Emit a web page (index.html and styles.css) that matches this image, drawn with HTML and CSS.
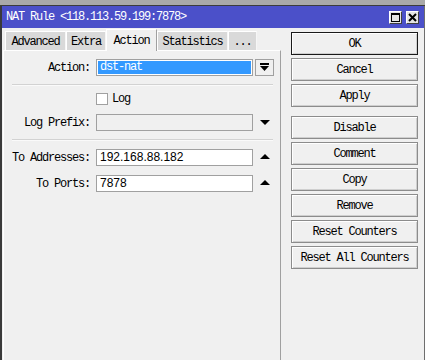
FILE: index.html
```html
<!DOCTYPE html>
<html lang="en">
<head>
    <meta charset="UTF-8">
    <title>NAT Rule</title>
    <link rel="stylesheet" href="styles.css">
</head>
<body>

    <!-- strip of the window behind -->
    <div class="top-strip"></div>

    <div class="window">

        <!-- Title bar -->
        <div class="titlebar">
            <span class="title">NAT Rule &lt;118.113.59.199:7878&gt;</span>
            <div class="win-buttons">
                <span class="win-btn">
                    <svg width="11" height="11" viewBox="0 0 11 11"><rect x="1.5" y="1.5" width="8" height="8" fill="none" stroke="#000" stroke-width="1"/><rect x="1" y="1" width="9" height="2" fill="#000"/></svg>
                </span>
                <span class="win-btn">
                    <svg width="11" height="11" viewBox="0 0 11 11"><path d="M2 2 L9 9 M9 2 L2 9" stroke="#000" stroke-width="2"/></svg>
                </span>
            </div>
        </div>

        <div class="content">

            <!-- Left side: tabs and form -->
            <div class="left">
                <div class="tabs">
                    <div class="tab tab-advanced">Advanced</div>
                    <div class="tab tab-extra">Extra</div>
                    <div class="tab tab-action active">Action</div>
                    <div class="tab tab-stats">Statistics</div>
                    <div class="tab tab-more">...</div>
                </div>

                <div class="panel">
                    <div class="row row-action">
                        <span class="label">Action:</span>
                        <div class="field select"><span class="selected">dst-nat</span></div>
                        <div class="drop-btn">
                            <svg width="9" height="9" viewBox="0 0 9 9"><rect x="0" y="0" width="9" height="2" fill="#000"/><path d="M0 3 L9 3 L4.5 8 Z" fill="#000"/></svg>
                        </div>
                    </div>

                    <div class="sep sep-first"></div>

                    <div class="check-row">
                        <span class="checkbox"></span>
                        <span class="check-label">Log</span>
                    </div>

                    <div class="row row-prefix">
                        <span class="label">Log Prefix:</span>
                        <div class="field disabled"></div>
                        <div class="side"><span class="tri-down"></span></div>
                    </div>

                    <div class="sep sep-second"></div>

                    <div class="row row-addr">
                        <span class="label">To Addresses:</span>
                        <div class="field text">192.168.88.182</div>
                        <div class="side"><span class="tri-up"></span></div>
                    </div>

                    <div class="row row-ports">
                        <span class="label">To Ports:</span>
                        <div class="field text">7878</div>
                        <div class="side"><span class="tri-up"></span></div>
                    </div>
                </div>
            </div>

            <!-- Right side: buttons -->
            <div class="buttons">
                <div class="btn default">OK</div>
                <div class="btn">Cancel</div>
                <div class="btn">Apply</div>
                <div class="btn group-start">Disable</div>
                <div class="btn">Comment</div>
                <div class="btn">Copy</div>
                <div class="btn">Remove</div>
                <div class="btn">Reset Counters</div>
                <div class="btn">Reset All Counters</div>
            </div>

        </div>
    </div>

</body>
</html>
```

FILE: styles.css
```css
/* Page */
html, body {
    margin: 0;
    height: 100%;
    overflow: hidden;
}

body {
    background-color: #a9a9a9;
    font-family: "Liberation Mono", "DejaVu Sans Mono", monospace;
    font-size: 12px;
    letter-spacing: -1.2px;
    color: #000;
}

.top-strip {
    height: 5px;
    background-color: #a9a9a9;
    border-bottom: 1px solid #3c3c3c;
}

/* Window frame */
.window {
    height: 354px;
    width: 422px;
    border-left: 2px solid #3a3a3a;
    border-right: 1px solid #6e6e6e;
    background-color: #f0f0f0;
    display: flex;
    flex-direction: column;
}

/* Title bar */
.titlebar {
    height: 22px;
    flex: none;
    background-color: #4b50c9;
    color: #fff;
    display: flex;
    align-items: center;
    justify-content: space-between;
    padding: 0 5px 0 4px;
}

.title {
    line-height: 14px;
}

.win-buttons {
    display: flex;
    gap: 4px;
}

.win-btn {
    width: 13px;
    height: 13px;
    box-sizing: border-box;
    background-color: #e4e4e4;
    border: 1px solid;
    border-color: #fff #404040 #404040 #fff;
    display: flex;
    align-items: center;
    justify-content: center;
}

.win-btn svg {
    display: block;
}

/* Main area */
.content {
    flex: 1;
    display: flex;
}

.left {
    width: 278px;
    margin-left: 1px;
    display: flex;
    flex-direction: column;
}

/* Tabs */
.tabs {
    height: 22px;
    display: flex;
    align-items: flex-end;
    padding-left: 2px;
}

.tab {
    height: 19px;
    box-sizing: border-box;
    background-color: #d9d9d9;
    border-left: 1px solid #fff;
    border-top: 1px solid #fff;
    border-right: 1px solid #f6f6f6;
    display: flex;
    align-items: center;
    justify-content: center;
    padding-top: 1px;
}

.tab-advanced { width: 61px; }
.tab-extra { width: 40px; }
.tab-action { width: 51px; }
.tab-stats { width: 71px; }
.tab-more { width: 29px; }

.tab.active {
    height: 22px;
    margin-bottom: -1px;
    background-color: #f0f0f0;
    border-right-color: #a0a0a0;
    padding-top: 0;
    position: relative;
    z-index: 1;
}

/* Form panel */
.panel {
    flex: 1;
    border-top: 1px solid #fff;
    border-left: 1px solid #fff;
    border-right: 1px solid #a0a0a0;
}

.row {
    display: flex;
    align-items: center;
    height: 17px;
}

.row-action { margin-top: 8px; }
.row-prefix { margin-top: 10px; }
.row-addr { margin-top: 8px; }
.row-ports { margin-top: 9px; }

.label {
    width: 86px;
    text-align: right;
    margin-right: 6px;
    flex: none;
}

.field {
    width: 157px;
    height: 17px;
    box-sizing: border-box;
    border: 1px solid #a0a0a0;
    background-color: #fff;
    flex: none;
}

.field.select {
    padding: 1px;
    background-color: #fff;
}

.selected {
    display: block;
    height: 13px;
    line-height: 13px;
    background-color: #3399ff;
    color: #fff;
    padding-left: 2px;
}

.field.disabled {
    background-color: #f0f0f0;
}

.field.text {
    font-family: "Liberation Sans", Arial, sans-serif;
    letter-spacing: 0;
    line-height: 15px;
    padding-left: 3px;
}

.drop-btn {
    width: 19px;
    height: 17px;
    margin-left: 2px;
    box-sizing: border-box;
    border: 1px solid #a0a0a0;
    background-color: #f0f0f0;
    display: flex;
    align-items: center;
    justify-content: center;
}

.side {
    width: 21px;
    display: flex;
    justify-content: center;
    padding-left: 1px;
}

.tri-down {
    width: 0;
    height: 0;
    border-left: 5px solid transparent;
    border-right: 5px solid transparent;
    border-top: 5px solid #000;
}

.tri-up {
    width: 0;
    height: 0;
    border-left: 5px solid transparent;
    border-right: 5px solid transparent;
    border-bottom: 5px solid #000;
    margin-top: -3px;
}

/* Separators between groups */
.sep {
    height: 1px;
    width: 261px;
    margin-left: 8px;
    background-color: #d2d2d2;
    border-bottom: 1px solid #fafafa;
}

.sep-first { margin-top: 8px; }
.sep-second { margin-top: 8px; }

/* Checkbox */
.check-row {
    display: flex;
    align-items: center;
    margin-top: 7px;
    margin-left: 92px;
    height: 11px;
}

.checkbox {
    width: 12px;
    height: 12px;
    box-sizing: border-box;
    border: 1px solid #a0a0a0;
    background-color: #fff;
    margin-right: 4px;
}

/* Buttons column */
.buttons {
    margin-left: 10px;
    margin-top: 4px;
    width: 127px;
    display: flex;
    flex-direction: column;
    gap: 3px;
}

.btn {
    height: 23px;
    box-sizing: border-box;
    border: 1px solid #8c8c8c;
    box-shadow: inset 1px 1px #fff, inset -1px -1px #cfcfcf;
    background-color: #f0f0f0;
    display: flex;
    align-items: center;
    justify-content: center;
}

.btn.default {
    border-color: #1a1a1a;
}

.btn.group-start {
    margin-top: 6px;
}
```
